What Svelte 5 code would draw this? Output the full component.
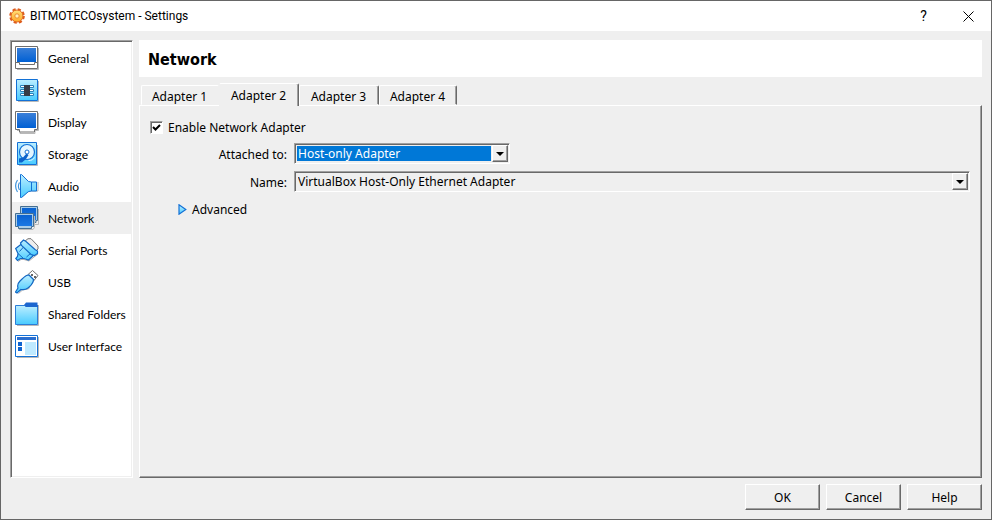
<script>
  const sections = ['General', 'System', 'Display', 'Storage', 'Audio', 'Network', 'Serial Ports', 'USB', 'Shared Folders', 'User Interface'];
  const adapters = ['Adapter 1', 'Adapter 2', 'Adapter 3', 'Adapter 4'];
  let section = $state('Network');
  let adapter = $state('Adapter 2');
  let enabled = $state(true);
  let attached = $state('Host-only Adapter');
  let device = $state('VirtualBox Host-Only Ethernet Adapter');
</script>

{#snippet icon(name)}
  <svg class="icon" width="25" height="24" viewBox="0 0 25 24" fill="none" aria-hidden="true">
    {#if name === 'General'}
      <path d="M2 23.5h21.5V2" stroke="#b9b9b9" />
      <path d="M.5.5h22v22h-22z" fill="#fff" stroke="#6f6f6f" />
      <path d="M2 2h19v14H2z" fill="url(#screen)" />
      <path d="M1 16.5h3.500v2h15v-2H22" fill="#fff" stroke="#6f6f6f" />
    {:else if name === 'System'}
      <path d="M3 23.500h20.500V3" stroke="#b9b9b9" />
      <path d="M1.500 1.500h21v21h-21z" fill="url(#cyan)" stroke="#1371d6" />
      <path d="M5.500 7.500h13v2h-13zM5.500 11.500h13v2h-13zM5.500 15.500h13v2h-13z" fill="#fff" stroke="#2c80b8" />
      <path d="M9 7h6v11H9z" fill="#363b45" />
    {:else if name === 'Display'}
      <path d="M2 20.500h3v3h15v-3h3.500V3" stroke="#b9b9b9" />
      <path d="M.500 1.500h22v18h-3v2.500h-15v-2.500h-4z" fill="#fff" stroke="#6f6f6f" />
      <path d="M2 3h19v15H2z" fill="url(#screen)" />
    {:else if name === 'Storage'}
      <path d="M4 23.500h18.500V3" stroke="#b9b9b9" />
      <path d="M2.500.500h19v22h-19z" fill="url(#cyan)" stroke="#1371d6" />
      <circle cx="12" cy="10" r="7.500" fill="#e4f6ff" stroke="#1371d6" stroke-width="1.200" />
      <path d="M4 16.500l4-1 3.500-4 2 1.500-2.500 4-4 3.500H4z" fill="#0c62cb" />
      <circle cx="12" cy="10" r="2" fill="#fff" stroke="#1371d6" />
      <path d="M13.500 18.500c3 0 5-1 6-3" stroke="#e4f6ff" />
    {:else if name === 'Audio'}
      <path d="M6.500 23.500l6.500-5.500 3-1h7V8" stroke="#b9b9b9" />
      <path d="M5.500.500h1l7 7 3 .500h5v9h-5l-3 .500-7 6h-1z" fill="url(#cyan)" stroke="#1371d6" />
      <path d="M16.500 8v9" stroke="#1371d6" />
      <path d="M2.500 6c-2.500 3.500-2.500 8.500 0 12M4.500 8.500c-1.500 2.500-1.500 5 0 7.500" stroke="#3d93dd" stroke-width="1.200" />
    {:else if name === 'Network'}
      <path d="M20 18.500h3.500V3" stroke="#b9b9b9" />
      <path d="M5.500.500h17v14h-1.500v2H7v-2H5.500z" fill="#a8cce8" stroke="#456f92" />
      <path d="M7 2h14v12H7z" fill="url(#deep)" />
      <path d="M4 23.500h14l1.500-2V10" stroke="#b9b9b9" />
      <path d="M.500 7.500h18v13h-2v2h-13v-2h-3z" fill="#a8cce8" stroke="#456f92" />
      <path d="M2 9h15v11H2z" fill="url(#deep)" />
    {:else if name === 'Serial Ports'}
      <path d="M3 23.500l3-2h3l5 1.500 5-4 4-3" stroke="#b0b0b0" />
      <path d="M9.500 3.500L13 .700h3l7 7.300v3l-2.500 2.500z" fill="#eee" stroke="#777" />
      <path d="M6.500 6L.700 10.500 3 15.500 2.500 18.500.700 20.500 2.500 22.500l3-2h3.500l4.500 1.500 5-4.500z" fill="url(#cyan)" stroke="#1267c4" stroke-width="1.200" />
      <path d="M3 15.500L8.500 20.500M9 8.500l-4.500 5M16 15l-4.500 4" stroke="#1267c4" />
      <path d="M5.500 5l3-3 2.500 1.500 9 8 2.500 1.500v2.500l-3 2-3.500-1-9.500-9z" fill="url(#cyan)" stroke="#1267c4" stroke-width="1.200" />
    {:else if name === 'USB'}
      <path d="M3.500 23.500l4-3.500 6-1 5-8" stroke="#b0b0b0" />
      <path d="M12.500 5l5-4.500 5.500 5-4.500 5.500z" fill="#fff" stroke="#6f6f6f" />
      <path d="M16 4h2v2h-2zM19 6h2v2h-2z" fill="#666" />
      <path d="M.500 22l2.500-4c-1-3 0-5 2-7s4.500-4.500 6.500-5.500l2.500-.500 4.500 4.500-.500 2.500c-1 2.500-3 4.500-5 6s-4.500 2-7 1.500L2 23z" fill="url(#cyan)" stroke="#1267c4" stroke-width="1.200" />
    {:else if name === 'Shared Folders'}
      <path d="M2 23.500h21.500V3" stroke="#b9b9b9" />
      <path d="M9 3l2-2.500h11.500V6H9z" fill="#1c66cf" />
      <path d="M.500 3.500h9l2 1h11v18H.500z" fill="url(#cyan)" stroke="#2b7ed8" />
      <path d="M9 3h14v2H11z" fill="#1c66cf" />
    {:else}
      <path d="M2 23.500h21.500V3" stroke="#b9b9b9" />
      <path d="M.500 1.500h22v21h-22z" fill="#fff" stroke="#1371d6" />
      <path d="M2 3h19v3H2z" fill="#2a6fd0" />
      <path d="M10 8h11v13H10z" fill="#bfeaff" />
      <path d="M3 8h4v4H3zM3 13h4v4H3z" fill="#1064cf" />
    {/if}
  </svg>
{/snippet}

<div class="window">
  <svg class="defs" width="0" height="0" aria-hidden="true">
    <defs>
      <linearGradient id="screen" x1="0" y1="0" x2="0" y2="1"><stop offset="0" stop-color="#3a7fd8" /><stop offset="1" stop-color="#0060d4" /></linearGradient>
      <linearGradient id="deep" x1="0" y1="0" x2="0" y2="1"><stop offset="0" stop-color="#0a62d0" /><stop offset="1" stop-color="#1a78e4" /></linearGradient>
      <linearGradient id="cyan" x1="0" y1="0" x2="0" y2="1"><stop offset="0" stop-color="#bdeeff" /><stop offset="1" stop-color="#48cbff" /></linearGradient>
      <linearGradient id="gear" x1="0" y1="0" x2="0" y2="1"><stop offset="0" stop-color="#ffe07a" /><stop offset="1" stop-color="#ffa726" /></linearGradient>
    </defs>
  </svg>

  <header class="titlebar">
    <svg width="16" height="16" viewBox="0 0 16 16" aria-hidden="true">
      <circle cx="8" cy="8" r="6.500" fill="none" stroke="#dd5a1c" stroke-width="2.600" stroke-dasharray="3 2.100" />
      <circle cx="8" cy="8" r="6" fill="url(#gear)" stroke="#e06a20" />
      <circle cx="8" cy="8" r="2.200" fill="#fff0c0" stroke="#ec8a2c" />
    </svg>
    <h1>BITMOTECOsystem - Settings</h1>
    <button class="caption" aria-label="Help">?</button>
    <button class="caption" aria-label="Close">
      <svg width="11" height="11" viewBox="0 0 11 11" aria-hidden="true"><path d="M.500.500l10 10M10.500.500l-10 10" stroke="#000" fill="none" /></svg>
    </button>
  </header>

  <div class="body">
    <nav class="sections" aria-label="Sections">
      {#each sections as name}
        <button class="section" class:current={name === section} onclick={() => (section = name)}>
          {@render icon(name)}
          <span>{name}</span>
        </button>
      {/each}
    </nav>

    <main>
      <h2>{section}</h2>
      <div class="tabs" role="tablist">
        {#each adapters as name}
          <button class="tab" role="tab" aria-selected={name === adapter} onclick={() => (adapter = name)}>{name}</button>
        {/each}
      </div>
      <div class="pane" role="tabpanel">
        <label class="enable">
          <input type="checkbox" bind:checked={enabled} />
          <span>Enable Network Adapter</span>
        </label>
        <div class="form">
          <label for="attached">Attached to:</label>
          <div class="combo short focused">
            <select id="attached" bind:value={attached}>
              <option>Host-only Adapter</option>
              <option>NAT</option>
              <option>Bridged Adapter</option>
            </select>
            <span class="drop"></span>
          </div>
          <label for="device">Name:</label>
          <div class="combo">
            <select id="device" bind:value={device}>
              <option>VirtualBox Host-Only Ethernet Adapter</option>
            </select>
            <span class="drop"></span>
          </div>
        </div>
        <button class="advanced">
          <svg width="9" height="11" viewBox="0 0 9 11" aria-hidden="true"><path d="M1 .800L7.800 5.500 1 10.200z" fill="url(#cyan)" stroke="#1371d6" stroke-width="1.200" /></svg>
          <span>Advanced</span>
        </button>
      </div>
    </main>
  </div>

  <footer>
    <button class="push">OK</button>
    <button class="push">Cancel</button>
    <button class="push">Help</button>
  </footer>
</div>

<style>
  :global(body) {
    background: #efefef;
  }
  * {
    box-sizing: border-box;
  }
  button,
  select {
    font: inherit;
    color: inherit;
    margin: 0;
    padding: 0;
    border: 0;
    background: none;
  }
  .window {
    display: flex;
    flex-direction: column;
    min-height: 100vh;
    border: 1px solid #666;
    background: #efefef;
    color: #000;
    font: 12px/16px 'Noto Sans', sans-serif;
  }
  .defs {
    position: absolute;
  }
  .titlebar {
    display: flex;
    align-items: center;
    height: 30px;
    padding-left: 8px;
    background: #fff;
    font-family: Roboto, sans-serif;
  }
  h1 {
    flex: 1;
    margin: 0 0 0 5px;
    font-size: 12px;
    font-weight: 400;
  }
  .caption {
    display: flex;
    align-items: center;
    justify-content: center;
    width: 45px;
    height: 30px;
    font-size: 14px;
  }
  .body {
    display: flex;
    flex: 1;
    gap: 6px;
    padding: 9px 9px 0;
  }
  .sections {
    width: 123px;
    flex: none;
    border: 1px solid;
    border-color: #a0a0a0 #fff #fff #a0a0a0;
    box-shadow: inset 1px 1px #696969, inset -1px -1px #efefef;
    background: #fff;
    padding: 1px;
    font-family: Lato, sans-serif;
  }
  .section {
    display: flex;
    align-items: center;
    gap: 8px;
    width: 100%;
    height: 32px;
    padding-left: 3px;
    white-space: nowrap;
  }
  .section span,
  .enable span,
  .advanced span {
    padding-top: 2px;
  }
  .section.current {
    background: #efefef;
  }
  .icon {
    flex: none;
  }
  main {
    display: flex;
    flex-direction: column;
    flex: 1;
    min-width: 0;
  }
  h2 {
    margin: 0;
    padding: 2px 9px 0;
    background: #fff;
    font-family: 'DejaVu Sans Condensed', 'DejaVu Sans', sans-serif;
    font-size: 16px;
    line-height: 35px;
  }
  .tabs {
    display: flex;
    align-items: flex-end;
    height: 28px;
    padding-left: 2px;
  }
  .tab {
    width: 80px;
    height: 20px;
    padding: 3px 1px 0 0;
    border: 1px solid;
    border-color: #fff #696969 transparent #fff;
    border-radius: 2px 2px 0 0;
    box-shadow: inset -1px 0 #a0a0a0;
    white-space: nowrap;
  }
  .tab:first-child {
    width: 78px;
    border-right-color: transparent;
    box-shadow: none;
  }
  .tab:last-child {
    width: 78px;
  }
  .tab[aria-selected='true'] {
    z-index: 1;
    height: 23px;
    margin-bottom: -1px;
    padding-top: 1px;
    background: #efefef;
    border-bottom: 0;
    border-left-color: #efefef;
  }
  .pane {
    flex: 1;
    padding: 12px 11px 12px 10px;
    border: 1px solid;
    border-color: #fff #696969 #696969 #fff;
    box-shadow: inset -1px -1px #a0a0a0;
  }
  .enable {
    display: flex;
    align-items: center;
    gap: 5px;
    height: 18px;
    width: max-content;
  }
  input {
    appearance: none;
    width: 13px;
    height: 13px;
    margin: 0;
    border: 1px solid;
    border-color: #a0a0a0 #fff #fff #a0a0a0;
    box-shadow: inset 1px 1px #696969;
    background: #fff;
  }
  input:checked {
    background: #fff url("data:image/svg+xml,%3Csvg xmlns='http://www.w3.org/2000/svg' viewBox='0 0 11 11'%3E%3Cpath d='M2 5l2.500 2.500L9 3' fill='none' stroke='%23000' stroke-width='2'/%3E%3C/svg%3E");
  }
  .form {
    display: grid;
    grid-template-columns: 137px 1fr;
    gap: 7px;
    align-items: center;
    margin-top: 7px;
  }
  .form label {
    padding-top: 2px;
    text-align: right;
  }
  .combo {
    display: flex;
    height: 21px;
    padding: 1px;
    border: 1px solid;
    border-color: #a0a0a0 #fff #fff #a0a0a0;
    box-shadow: inset 1px 1px #696969;
  }
  .short {
    width: 216px;
  }
  select {
    appearance: none;
    flex: 1;
    min-width: 0;
    margin: 1px;
    padding-left: 1px;
    border-radius: 0;
    outline: 0;
  }
  .focused select {
    background: #0078d7;
    color: #fff;
  }
  .drop {
    display: flex;
    align-items: center;
    justify-content: center;
    width: 16px;
    border: 1px solid;
    border-color: #fff #696969 #696969 #fff;
    box-shadow: inset -1px -1px #a0a0a0;
  }
  .drop::after {
    content: '';
    border: solid transparent;
    border-width: 4px 4px 0;
    border-top-color: #000;
  }
  .advanced {
    display: flex;
    align-items: center;
    gap: 5px;
    margin: 8px 0 0 28px;
  }
  footer {
    display: flex;
    justify-content: flex-end;
    gap: 6px;
    padding: 6px 9px 9px;
  }
  .push {
    width: 75px;
    height: 26px;
    padding-top: 2px;
    border: 1px solid;
    border-color: #fff #696969 #696969 #fff;
    box-shadow: inset -1px -1px #a0a0a0;
  }
</style>
